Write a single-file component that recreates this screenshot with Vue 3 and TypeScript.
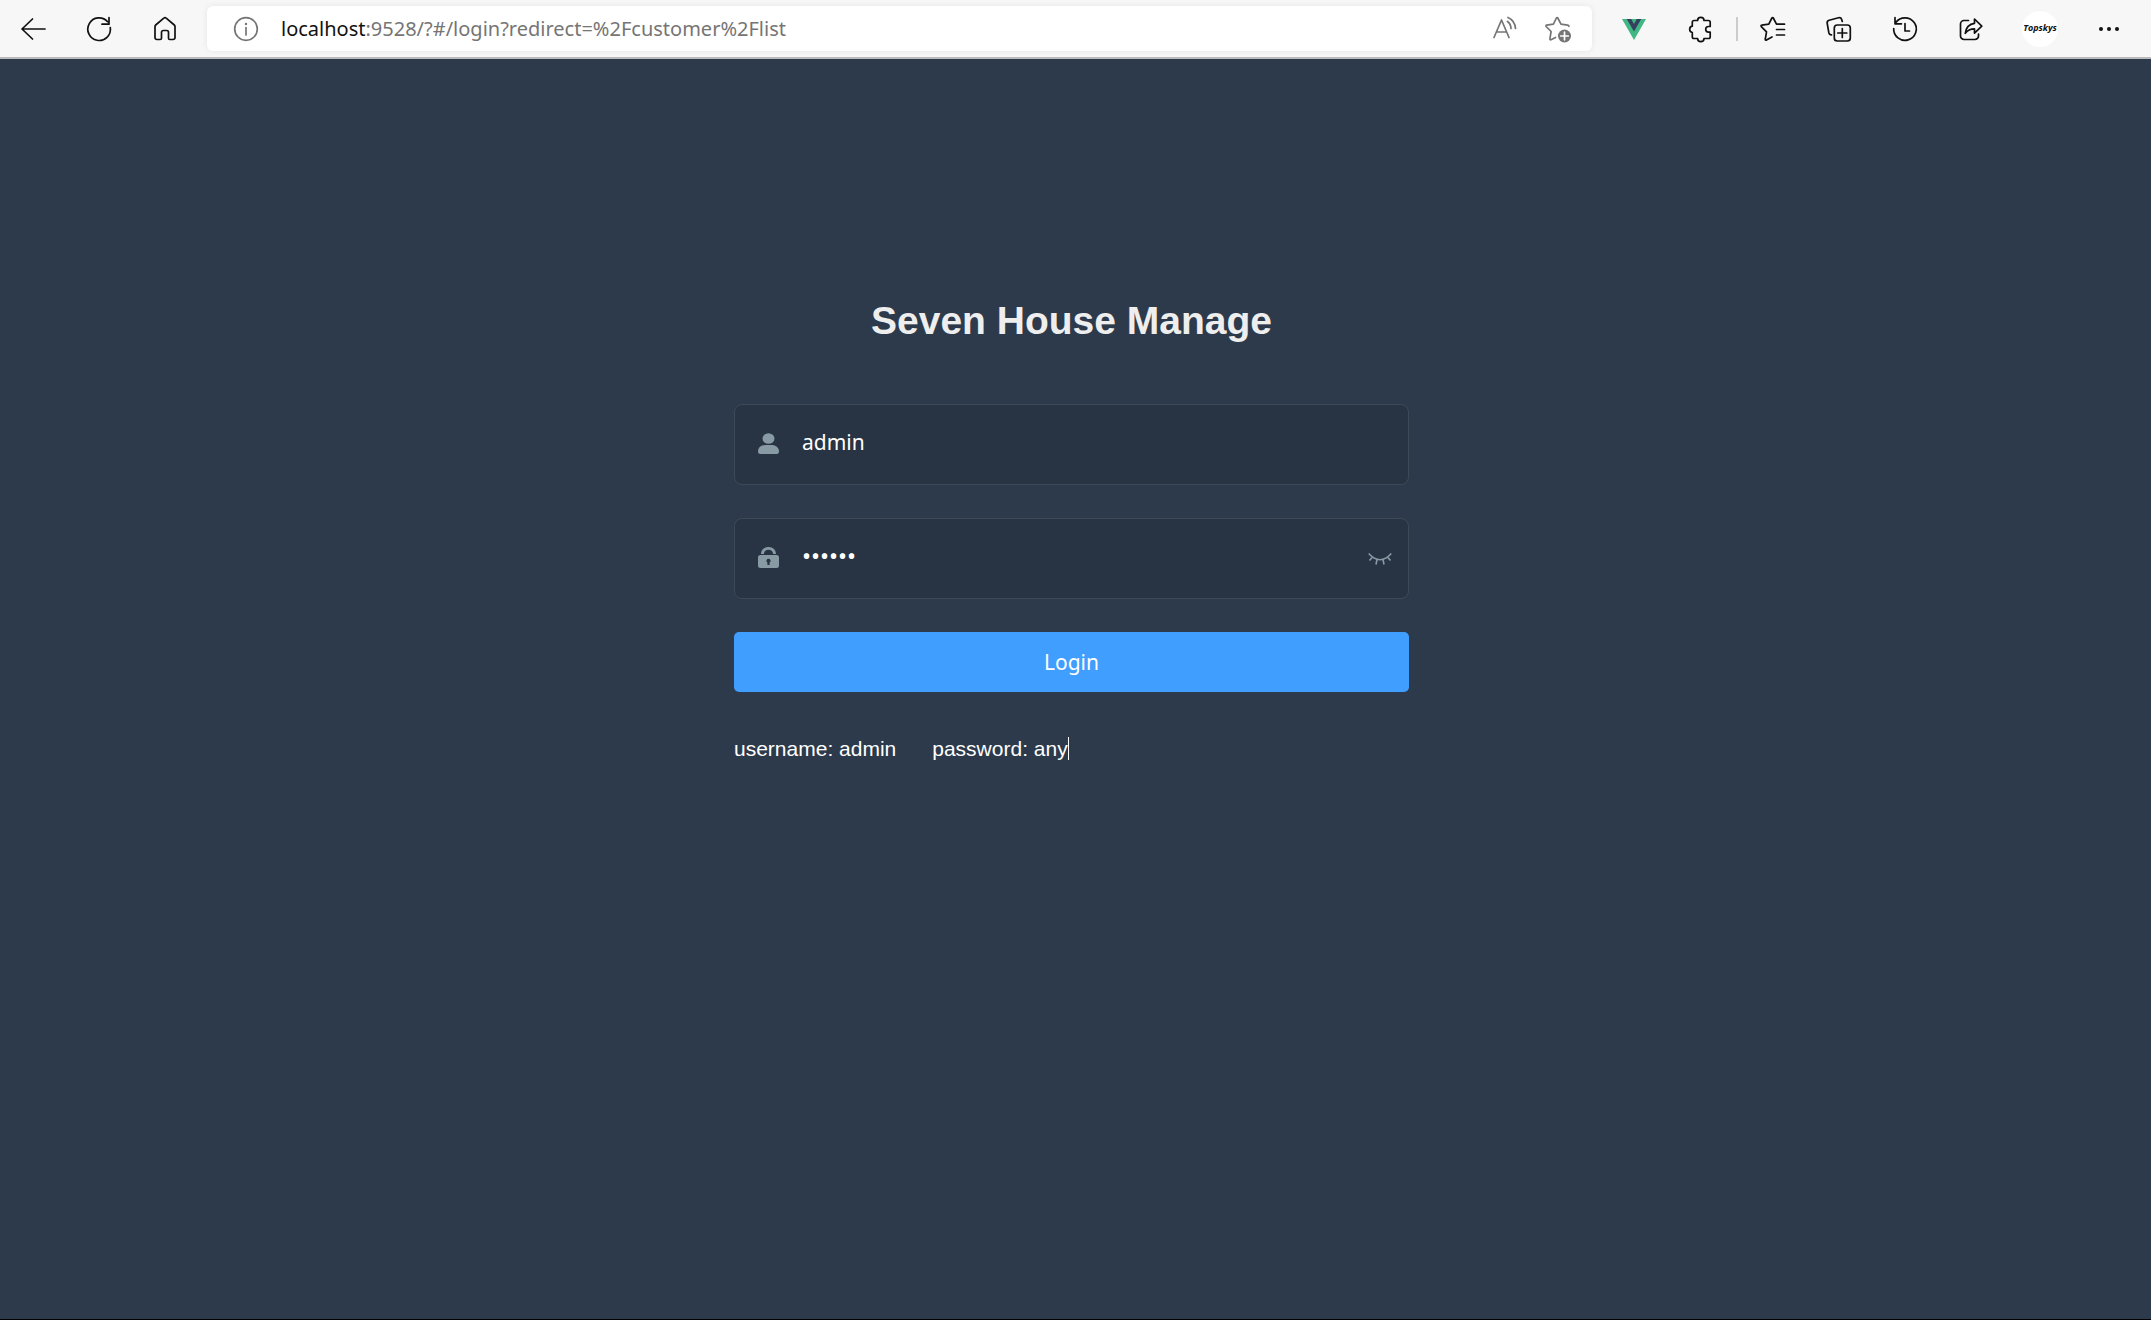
<script setup lang="ts">
import { ref } from 'vue'

const username = ref('admin')
const password = ref('111111')
const showPassword = ref(false)
</script>

<template>
  <div class="window">
    <header class="toolbar">
      <button class="tool" type="button" aria-label="Back">
        <svg width="28" height="28" viewBox="0 0 28 28"><path d="M26 14H3M13.500 4L3 14l10.500 10" /></svg>
      </button>
      <button class="tool" type="button" aria-label="Refresh">
        <svg width="28" height="28" viewBox="0 0 28 28"><path d="M25.300 12.500A11.300 11.300 0 1 1 22.600 6.700M24 2.500v6.700h-7" /></svg>
      </button>
      <button class="tool" type="button" aria-label="Home">
        <svg width="28" height="28" viewBox="0 0 28 28"><path d="M4 11.500a2 2 0 0 1 .7-1.500l8.100-6.900a1.800 1.800 0 0 1 2.400 0l8.100 6.900a2 2 0 0 1 .7 1.500v11.200a1.800 1.800 0 0 1-1.800 1.800h-3.400a1.300 1.300 0 0 1-1.300-1.300v-6a1.700 1.700 0 0 0-1.700-1.700h-3.600a1.700 1.700 0 0 0-1.700 1.700v6a1.300 1.300 0 0 1-1.300 1.300H5.800A1.800 1.800 0 0 1 4 22.700z" /></svg>
      </button>

      <div class="address">
        <button class="site-info" type="button" aria-label="Site information">
          <svg width="28" height="28" viewBox="0 0 28 28"><circle cx="14" cy="14" r="11.300" /><path d="M14 12.500v7.500" /><circle class="solid" cx="14" cy="9" r="1.200" /></svg>
        </button>
        <span class="url"><span class="host">localhost</span>:9528/?#/login?redirect=%2Fcustomer%2Flist</span>
        <button class="site-tool" type="button" aria-label="Read aloud">
          <svg width="28" height="28" viewBox="0 0 28 28"><path d="M3 22.500L10.500 5L18 22.500M5.800 17h9.400M16.500 6.500a9 9 0 0 1 3.500 7M17 2.500a13 13 0 0 1 7.500 11" /></svg>
        </button>
        <button class="site-tool" type="button" aria-label="Add to favorites">
          <svg width="28" height="28" viewBox="0 0 28 28"><path d="M11.500 22.500L7 24.800a.8.800 0 0 1-1.100-.9l1.200-7.400-5-5a.8.800 0 0 1 .5-1.300l6.800-1 3-6.200a.8.800 0 0 1 1.400 0l3.200 6.200 6.500.9q1.200.2 1.500 1.200" /><circle class="solid" cx="20.500" cy="21" r="6.500" /><path class="plus" d="M20.500 17.200v7.600M16.700 21h7.600" /></svg>
        </button>
      </div>

      <button class="tool" type="button" aria-label="Vue devtools">
        <svg width="28" height="28" viewBox="0 0 28 28"><path class="vue-green" d="M2 4h24L14 25z" /><path class="vue-navy" d="M6.800 4h4.400L14 9l2.800-5h4.400L14 16.600z" /></svg>
      </button>
      <button class="tool" type="button" aria-label="Extensions">
        <svg width="28" height="28" viewBox="0 0 28 28"><path d="M11.600 5.500a3.200 3.200 0 0 1 6.400 0h4.500a1.700 1.700 0 0 1 1.700 1.700v4.300h-1.700a2.800 2.800 0 0 0 0 5.600h1.700v4.700a1.700 1.700 0 0 1-1.700 1.700H18a3.200 3.200 0 0 1-6.400 0H8a1.700 1.700 0 0 1-1.700-1.700v-4.300a3.200 3.200 0 0 1 0-6.300v-4A1.700 1.700 0 0 1 8 5.500z" /></svg>
      </button>
      <span class="divider"></span>
      <button class="tool" type="button" aria-label="Favorites">
        <svg width="28" height="28" viewBox="0 0 28 28"><path d="M13 22l-5.500 3a.8.800 0 0 1-1.200-.9l1.200-7.300-5.200-5.200a.8.800 0 0 1 .5-1.400l7-1 3.100-6.200a.8.800 0 0 1 1.400 0l3.200 6.200H25.500M17.500 14.500h8M17.500 20h8" /></svg>
      </button>
      <button class="tool" type="button" aria-label="Collections">
        <svg width="28" height="28" viewBox="0 0 28 28"><path d="M6.500 19.800c-1.700.2-2.300-.5-2.600-1.800L2.200 8.300c-.3-1.500.5-2.600 2-3L13.500 2.700c1.600-.4 2.700.2 3.200 1.700l.6 2" /><rect x="9.300" y="10" width="16" height="16" rx="3" /><path d="M17.300 13.500v9M12.800 18h9" /></svg>
      </button>
      <button class="tool" type="button" aria-label="History">
        <svg width="28" height="28" viewBox="0 0 28 28"><path d="M2.700 13.500A11.300 11.300 0 1 0 4.800 7.500M4 2.500v6.300h6.500M14 8.500v7.500h4.500" /></svg>
      </button>
      <button class="tool" type="button" aria-label="Share">
        <svg width="28" height="28" viewBox="0 0 28 28"><path d="M11.500 5.500H7a3.500 3.500 0 0 0-3.500 3.500v12A3.500 3.500 0 0 0 7 24.500h11a3.500 3.500 0 0 0 3.500-3.500v-2" /><path d="M17.500 4l7.300 7.200-7.300 7v-4.300c-4.300 0-7 1.300-9.200 4.400.7-5.700 3.700-9.300 9.200-10z" /></svg>
      </button>
      <button class="profile" type="button"><span class="avatar">Topskys</span></button>
      <button class="tool" type="button" aria-label="Settings and more">
        <svg width="28" height="28" viewBox="0 0 28 28"><circle class="solid" cx="6" cy="14" r="2" /><circle class="solid" cx="14" cy="14" r="2" /><circle class="solid" cx="22" cy="14" r="2" /></svg>
      </button>
    </header>

    <main class="page">
      <form class="login" @submit.prevent>
        <h1>Seven House Manage</h1>
        <div class="field">
          <label for="username" aria-label="Username">
            <svg width="21" height="21" viewBox="0 0 21 21"><ellipse cx="10.500" cy="5.500" rx="6" ry="5.300" /><path d="M0 18.500C0 14.500 3.500 12 7.500 12h6c4 0 7.500 2.500 7.500 6.500 0 1.600-.8 2.500-2.300 2.500H2.300C.8 21 0 20.100 0 18.500z" /></svg>
          </label>
          <input id="username" v-model="username" type="text" autocomplete="off" />
        </div>
        <div class="field">
          <label for="password" aria-label="Password">
            <svg width="21" height="21" viewBox="0 0 21 21"><path fill-rule="evenodd" d="M3 7C3 3 6 0 10.500 0S18 3 18 7h-3c0-2.600-1.600-4.200-4.500-4.200S6 4.400 6 7zM2.500 8h16A2.500 2.500 0 0 1 21 10.500v8a2.500 2.500 0 0 1-2.500 2.500h-16A2.500 2.500 0 0 1 0 18.500v-8A2.500 2.500 0 0 1 2.500 8zm8 3.800a2 2 0 0 0-1.100 3.700V18h2.200v-2.500a2 2 0 0 0-1.100-3.700z" /></svg>
          </label>
          <input id="password" v-model="password" :type="showPassword ? 'text' : 'password'" autocomplete="off" />
          <button class="reveal" type="button" aria-label="Show password" @click="showPassword = !showPassword">
            <svg width="24" height="14" viewBox="0 0 24 14"><path d="M.7 1.500Q12 14 23.300 1.500M4.500 5L1.500 8.500M9 7.500L8 12.500M15 7.500l1 5M19.500 5l3 3.500" /></svg>
          </button>
        </div>
        <button class="submit" type="submit">Login</button>
        <div class="tips">
          <span>username: admin</span>
          <span class="caret">password: any</span>
        </div>
      </form>
    </main>
  </div>
</template>

<style>
body {
  margin: 0;
}
</style>

<style scoped>
.window {
  display: flex;
  flex-direction: column;
  min-height: 100vh;
  box-sizing: border-box;
  border-bottom: 1px solid #000;
  background: #2d3a4b;
  font-family: "Liberation Sans", Arial, sans-serif;
}

button {
  padding: 0;
  border: 0;
  background: none;
  font: inherit;
  color: inherit;
  cursor: pointer;
}

svg {
  display: block;
}

.toolbar {
  display: flex;
  align-items: center;
  height: 57px;
  padding-right: 9px;
  border-bottom: 2px solid #bababa;
  background: #f7f7f7;
  color: #111;
}

.toolbar svg {
  fill: none;
  stroke: currentColor;
  stroke-width: 1.7;
  stroke-linecap: round;
  stroke-linejoin: round;
}

.toolbar .solid {
  fill: currentColor;
  stroke: none;
}

.toolbar .plus {
  stroke: #fff;
}

.toolbar .vue-green {
  fill: #41b883;
  stroke: none;
}

.toolbar .vue-navy {
  fill: #34405e;
  stroke: none;
}

.tool {
  display: flex;
  flex: none;
  align-items: center;
  justify-content: center;
  width: 66px;
  height: 45px;
}

.address {
  display: flex;
  flex: 1;
  align-items: center;
  height: 45px;
  margin: 0 9px;
  padding: 0 20px 0 25px;
  box-sizing: border-box;
  border-radius: 6px;
  background: #fff;
  box-shadow: 0 0 6px rgba(0, 0, 0, 0.08);
  color: #757575;
}

.url {
  flex: 1;
  margin-left: 21px;
  font-family: "Noto Sans", "Open Sans", sans-serif;
  font-size: 20px;
  line-height: 28px;
  white-space: nowrap;
}

.host {
  color: #111;
}

.site-tool + .site-tool {
  margin-left: 25px;
}

.divider {
  width: 2px;
  height: 24px;
  margin: 0 2px 0 3px;
  background: #ccc;
}

.profile {
  display: flex;
  justify-content: center;
  width: 72px;
}

.avatar {
  width: 36px;
  height: 36px;
  border-radius: 50%;
  background: #fff;
  font-family: "Open Sans", sans-serif;
  font-size: 9px;
  font-style: italic;
  font-weight: 700;
  line-height: 34px;
  text-align: center;
}

.page {
  flex: 1;
  padding: 239px 8px 0 0;
}

.login {
  width: 675px;
  max-width: 100%;
  margin: 0 auto;
}

h1 {
  margin: 0 0 61px;
  color: #eee;
  font-size: 39px;
  font-weight: 700;
  line-height: 45px;
  text-align: center;
}

.field {
  display: flex;
  height: 81px;
  margin-bottom: 33px;
  padding: 0 16px 0 23px;
  box-sizing: border-box;
  border: 1px solid #3e4957;
  border-radius: 8px;
  background: #283443;
}

.field label {
  display: flex;
  align-items: center;
  height: 76px;
}

.field label svg {
  fill: #889aa4;
}

.field input {
  flex: 1;
  min-width: 0;
  height: 73px;
  padding: 0 0 0 23px;
  border: 0;
  outline: 0;
  background: transparent;
  color: #fff;
  font-family: "Noto Sans", "Open Sans", sans-serif;
  font-size: 21px;
}

.field input[type="password"] {
  font-size: 24px;
}

.reveal svg {
  fill: none;
  stroke: #889aa4;
  stroke-width: 1.6;
}

.submit {
  display: block;
  width: 100%;
  height: 60px;
  border-radius: 5px;
  background: #409eff;
  color: #fff;
  font-family: "Noto Sans", "Open Sans", sans-serif;
  font-size: 21px;
}

.tips {
  display: flex;
  align-items: center;
  gap: 36px;
  margin-top: 45px;
  color: #fff;
  font-size: 21px;
  line-height: 23px;
}

.caret {
  border-right: 1px solid #fff;
}
</style>
